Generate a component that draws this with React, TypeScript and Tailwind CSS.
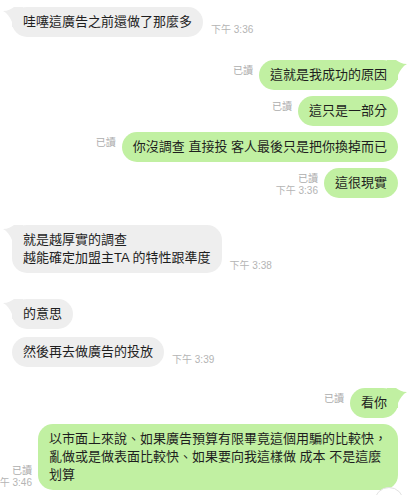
import type { ReactNode } from "react";

type Msg =
  | { side: "in"; mt: string; text: ReactNode; time?: string; tail?: boolean }
  | { side: "out"; mt: string; text: ReactNode; time?: string; tail?: boolean };

const messages: Msg[] = [
  { side: "in", mt: "mt-0", text: "哇噻這廣告之前還做了那麼多", time: "下午 3:36", tail: true },
  { side: "out", mt: "mt-[23px]", text: "這就是我成功的原因", tail: true },
  { side: "out", mt: "mt-[6px]", text: "這只是一部分" },
  { side: "out", mt: "mt-[6px]", text: "你沒調查 直接投 客人最後只是把你換掉而已" },
  { side: "out", mt: "mt-[6px]", text: "這很現實", time: "下午 3:36" },
  {
    side: "in",
    mt: "mt-[27px]",
    text: (
      <>
        就是越厚實的調查
        <br />
        越能確定加盟主TA 的特性跟準度
      </>
    ),
    time: "下午 3:38",
    tail: true,
  },
  { side: "in", mt: "mt-[26px]", text: "的意思", tail: true },
  { side: "in", mt: "mt-[8px]", text: "然後再去做廣告的投放", time: "下午 3:39" },
  { side: "out", mt: "mt-[21px]", text: "看你", tail: true },
  {
    side: "out",
    mt: "mt-[6px]",
    text: (
      <>
        以市面上來說、如果廣告預算有限畢竟這個用騙的比較快，
        <br />
        亂做或是做表面比較快、如果要向我這樣做 成本 不是這麼
        <br />
        划算
      </>
    ),
    time: "下午 3:46",
  },
];

function Tail({ side }: { side: "in" | "out" }) {
  return (
    <svg
      width="20"
      height="20"
      viewBox="0 0 20 20"
      className={
        side === "in"
          ? "absolute -left-[9px] top-0 fill-[#eeeeee]"
          : "absolute -right-[9px] top-0 -scale-x-100 fill-[#c1f0a2]"
      }
      aria-hidden
    >
      <path d="M0 4 C5 4 8 2 11 0 L20 0 L20 20 L9 20 L9 15 C7 10 4 6 0 4 Z" />
    </svg>
  );
}

function Bubble({ side, tail, children }: { side: "in" | "out"; tail?: boolean; children: ReactNode }) {
  return (
    <div
      className={`relative shrink-0 whitespace-nowrap rounded-[15px] px-[11px] py-[6px] text-[13px] leading-[18px] text-[#1e1e1e] ${
        side === "in" ? "bg-[#eeeeee]" : "bg-[#c1f0a2]"
      }`}
    >
      {tail && <Tail side={side} />}
      <span className="relative">{children}</span>
    </div>
  );
}

export default function App() {
  return (
    <div className="relative h-[495px] w-full overflow-hidden bg-white pt-[7px] font-['Liberation_Sans','Noto_Sans_CJK_TC',sans-serif]">
      {messages.map((m, i) =>
        m.side === "in" ? (
          <div key={i} className={`flex items-end pl-[12px] ${m.mt}`}>
            <Bubble side="in" tail={m.tail}>
              {m.text}
            </Bubble>
            {m.time && (
              <span className="mb-px ml-[8px] shrink-0 text-[10px] leading-[12px] text-[#b4b4b4]">
                {m.time}
              </span>
            )}
          </div>
        ) : (
          <div key={i} className={`flex items-end justify-end pr-[15px] ${m.mt}`}>
            <div className="mb-px mr-[6px] flex shrink-0 flex-col items-end text-[10px] leading-[12px] text-[#adadad]">
              <span>已讀</span>
              <span className="h-[12px] whitespace-nowrap text-[#b4b4b4]">{m.time}</span>
            </div>
            <Bubble side="out" tail={m.tail}>
              {m.text}
            </Bubble>
          </div>
        )
      )}
      <div className="absolute left-[374px] top-[487px] size-[30px] rounded-full border border-[#e2e2e2] bg-white" />
    </div>
  );
}
